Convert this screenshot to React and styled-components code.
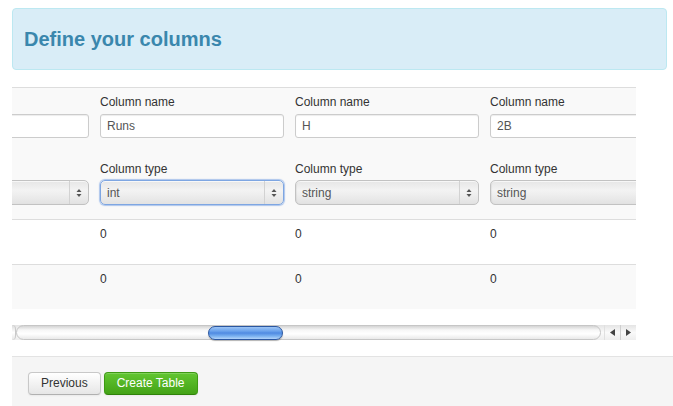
import React from 'react';
import styled, { createGlobalStyle } from 'styled-components';

const Global = createGlobalStyle`
  html, body { margin: 0; padding: 0; overflow: hidden; background: #fff; }
  body { font-family: "Liberation Sans", Arial, sans-serif; font-size: 12px; color: #333; }
`;

const Page = styled.div`
  width: 673px;
  height: 406px;
  box-sizing: border-box;
  padding-top: 8px;
  display: flex;
  flex-direction: column;
`;

const Alert = styled.div`
  margin: 0 6px 0 12px;
  height: 62px;
  box-sizing: border-box;
  background: #d9edf7;
  border: 1px solid #bce8f1;
  border-radius: 4px;
  display: flex;
  align-items: center;
  padding-left: 11px;
`;

const Title = styled.h3`
  margin: 0;
  font-size: 20px;
  line-height: 24px;
  font-weight: bold;
  color: #3a87ad;
`;

const TableWrap = styled.div`
  margin: 17px 0 0 12px;
  width: 624px;
  overflow: hidden;
  border-top: 1px solid #ddd;
  flex: none;
`;

const Grid = styled.div`
  margin-left: -115px;
  width: 780px;
  display: flex;
  flex-direction: column;
`;

const Row = styled.div`
  display: flex;
  background: ${p => (p.$striped ? '#f9f9f9' : '#fff')};
  border-top: ${p => (p.$first ? 'none' : '1px solid #ddd')};
`;

const HeadCell = styled.div`
  flex: none;
  width: 195px;
  box-sizing: border-box;
  padding: 6px 8px 14px;
  display: flex;
  flex-direction: column;
  align-items: flex-start;
`;

const DataCell = styled.div`
  flex: none;
  width: 195px;
  height: 44px;
  box-sizing: border-box;
  padding: 7px 8px 0;
  line-height: 14px;
  color: #333;
`;

const Label = styled.label`
  display: block;
  line-height: 16px;
  margin-bottom: ${p => p.$mb}px;
  color: #333;
`;

const TextInput = styled.input`
  width: 184px;
  height: 24px;
  box-sizing: border-box;
  margin: 0 0 23px;
  padding: 0 6px;
  border: 1px solid #ccc;
  border-radius: 3px;
  background: #fff;
  box-shadow: inset 0 1px 1px rgba(0, 0, 0, 0.075);
  font-family: "Liberation Sans", Arial, sans-serif;
  font-size: 12px;
  color: #555;
  outline: none;
`;

const SelectBox = styled.div`
  width: 184px;
  height: 25px;
  box-sizing: border-box;
  display: flex;
  align-items: stretch;
  border: 1px solid ${p => (p.$focused ? '#7ea6e2' : '#c2c2c2')};
  border-radius: 5px;
  background: linear-gradient(to bottom, #e6e6e6 0%, #f3f3f3 40%, #eeeeee 60%, #e2e2e2 100%);
  box-shadow: ${p =>
    p.$focused
      ? '0 0 1px 1px rgba(110, 155, 225, 0.55), inset 0 1px 0 rgba(255,255,255,0.7)'
      : 'inset 1px 0 1px rgba(0,0,0,0.06), inset 0 1px 0 rgba(255,255,255,0.7)'};
  color: #555;
`;

const SelectText = styled.span`
  flex: 1;
  padding-left: 6px;
  line-height: 25px;
`;

const SelectArrow = styled.span`
  flex: none;
  width: 18px;
  border-left: 1px solid #d2d2d2;
  display: flex;
  align-items: center;
  justify-content: center;
`;

const ScrollBar = styled.div`
  margin: 16px 0 0 12px;
  width: 624px;
  height: 15px;
  flex: none;
  display: flex;
  align-items: stretch;
  background: linear-gradient(to bottom, #e4e4e4, #fafafa 50%, #eeeeee);
`;

const EndCap = styled.div`
  flex: none;
  width: 3px;
  border-right: 1px solid #c9c9c9;
  border-radius: 0 8px 8px 0;
  background: linear-gradient(to bottom, #dadada, #ffffff 50%, #e6e6e6);
`;

const Track = styled.div`
  flex: 1;
  display: flex;
  align-items: center;
  border: 1px solid #c6c6c6;
  border-radius: 8px;
  background: linear-gradient(to bottom, #d4d4d4 0%, #f6f6f6 30%, #ffffff 60%, #e9e9e9 100%);
`;

const Thumb = styled.div`
  margin-left: ${p => p.$offset}px;
  width: 75px;
  height: 14px;
  box-sizing: border-box;
  border: 1px solid #2a56a0;
  border-radius: 7px;
  background: linear-gradient(to bottom, #9cc4f5 0%, #6aa2ec 35%, #4f8ae2 50%, #78afef 75%, #b3d4fa 100%);
  box-shadow: 0 1px 1px rgba(0, 0, 0, 0.3);
`;

const ArrowBtn = styled.div`
  flex: none;
  width: 15px;
  margin-left: ${p => (p.$first ? 3 : 0)}px;
  border-left: 1px solid ${p => (p.$first ? '#e0e0e0' : '#cfcfcf')};
  display: flex;
  align-items: center;
  justify-content: center;
`;

const Footer = styled.div`
  margin: 16px 0 0 12px;
  flex: 1;
  background: #f5f5f5;
  border-top: 1px solid #e3e3e3;
  padding: 15px 16px 0;
  display: flex;
  align-items: flex-start;
  gap: 3px;
`;

const Button = styled.button`
  height: 23px;
  padding: 0 12px;
  border-radius: 4px;
  font-family: "Liberation Sans", Arial, sans-serif;
  font-size: 12px;
  line-height: 21px;
  cursor: pointer;
  border: 1px solid ${p => (p.$primary ? '#3e9a14' : '#c8c8c8')};
  border-bottom-color: ${p => (p.$primary ? '#2f8209' : '#b0b0b0')};
  color: ${p => (p.$primary ? '#fff' : '#333')};
  background: ${p =>
    p.$primary
      ? 'linear-gradient(to bottom, #62c631, #44a317)'
      : 'linear-gradient(to bottom, #ffffff, #e6e6e6)'};
  box-shadow: inset 0 1px 0 rgba(255, 255, 255, 0.2), 0 1px 2px rgba(0, 0, 0, 0.05);
`;

const UpDown = () => (
  <svg width="6" height="10" viewBox="0 0 6 10">
    <polygon points="0.5,4 3,1 5.5,4" fill="#555" />
    <polygon points="0.5,6 3,9 5.5,6" fill="#555" />
  </svg>
);

const Tri = ({ dir }) => (
  <svg width="5" height="7" viewBox="0 0 5 7">
    {dir === 'left' ? (
      <polygon points="5,0 0,3.5 5,7" fill="#444" />
    ) : (
      <polygon points="0,0 5,3.5 0,7" fill="#444" />
    )}
  </svg>
);

const columns = [
  { name: 'AB', type: 'int' },
  { name: 'Runs', type: 'int', focused: true },
  { name: 'H', type: 'string' },
  { name: '2B', type: 'string' },
];

const dataRows = [
  ['0', '0', '0', '0'],
  ['0', '0', '0', '0'],
];

export default function App() {
  return (
    <>
      <Global />
      <Page>
        <Alert>
          <Title>Define your columns</Title>
        </Alert>
        <TableWrap>
          <Grid>
            <Row $striped $first>
              {columns.map((c, i) => (
                <HeadCell key={i}>
                  <Label $mb={4}>Column name</Label>
                  <TextInput readOnly value={c.name} />
                  <Label $mb={3}>Column type</Label>
                  <SelectBox $focused={c.focused}>
                    <SelectText>{c.type}</SelectText>
                    <SelectArrow>
                      <UpDown />
                    </SelectArrow>
                  </SelectBox>
                </HeadCell>
              ))}
            </Row>
            {dataRows.map((r, ri) => (
              <Row key={ri} $striped={ri % 2 === 1}>
                {r.map((v, ci) => (
                  <DataCell key={ci}>{v}</DataCell>
                ))}
              </Row>
            ))}
          </Grid>
        </TableWrap>
        <ScrollBar>
          <EndCap />
          <Track>
            <Thumb $offset={191} />
          </Track>
          <ArrowBtn $first>
            <Tri dir="left" />
          </ArrowBtn>
          <ArrowBtn>
            <Tri dir="right" />
          </ArrowBtn>
        </ScrollBar>
        <Footer>
          <Button>Previous</Button>
          <Button $primary>Create Table</Button>
        </Footer>
      </Page>
    </>
  );
}
